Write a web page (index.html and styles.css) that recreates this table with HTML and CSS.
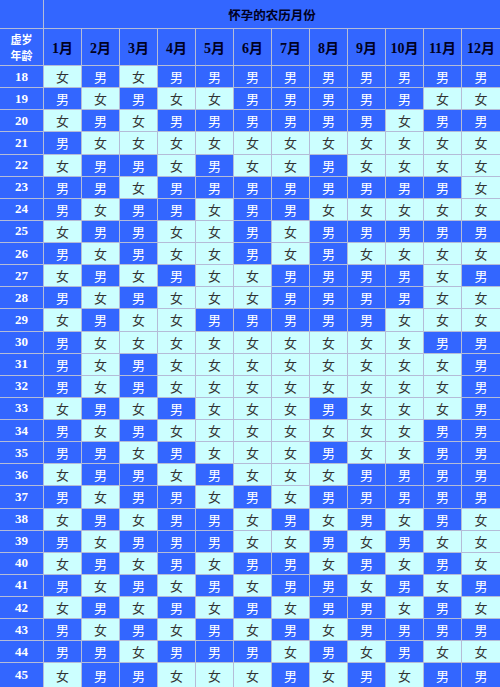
FILE: index.html
```html
<!DOCTYPE html>
<html lang="zh-CN">
<head>
<meta charset="utf-8">
<title>清宫生男生女表</title>
<link rel="stylesheet" href="styles.css">
</head>
<body>
<div class="chart">
  <div class="hd blank"></div>
  <div class="hd title">怀孕的农历月份</div>
  <div class="hd agehead"><span class="line">虚岁</span><span class="line">年龄</span></div>
  <div class="hd month">1月</div><div class="hd month">2月</div><div class="hd month">3月</div><div class="hd month">4月</div><div class="hd month">5月</div><div class="hd month">6月</div><div class="hd month">7月</div><div class="hd month">8月</div><div class="hd month">9月</div><div class="hd month">10月</div><div class="hd month">11月</div><div class="hd month">12月</div>

  <div class="age">18</div><span class="f">女</span><span class="m">男</span><span class="f">女</span><span class="m">男</span><span class="m">男</span><span class="m">男</span><span class="m">男</span><span class="m">男</span><span class="m">男</span><span class="m">男</span><span class="m">男</span><span class="m">男</span>
  <div class="age">19</div><span class="m">男</span><span class="f">女</span><span class="m">男</span><span class="f">女</span><span class="f">女</span><span class="m">男</span><span class="m">男</span><span class="m">男</span><span class="m">男</span><span class="m">男</span><span class="f">女</span><span class="f">女</span>
  <div class="age">20</div><span class="f">女</span><span class="m">男</span><span class="f">女</span><span class="m">男</span><span class="m">男</span><span class="m">男</span><span class="m">男</span><span class="m">男</span><span class="m">男</span><span class="f">女</span><span class="m">男</span><span class="m">男</span>
  <div class="age">21</div><span class="m">男</span><span class="f">女</span><span class="f">女</span><span class="f">女</span><span class="f">女</span><span class="f">女</span><span class="f">女</span><span class="f">女</span><span class="f">女</span><span class="f">女</span><span class="f">女</span><span class="f">女</span>
  <div class="age">22</div><span class="f">女</span><span class="m">男</span><span class="m">男</span><span class="f">女</span><span class="m">男</span><span class="f">女</span><span class="f">女</span><span class="m">男</span><span class="f">女</span><span class="f">女</span><span class="f">女</span><span class="f">女</span>
  <div class="age">23</div><span class="m">男</span><span class="m">男</span><span class="f">女</span><span class="m">男</span><span class="m">男</span><span class="m">男</span><span class="m">男</span><span class="m">男</span><span class="m">男</span><span class="m">男</span><span class="m">男</span><span class="f">女</span>
  <div class="age">24</div><span class="m">男</span><span class="f">女</span><span class="m">男</span><span class="m">男</span><span class="f">女</span><span class="m">男</span><span class="m">男</span><span class="f">女</span><span class="f">女</span><span class="f">女</span><span class="f">女</span><span class="f">女</span>
  <div class="age">25</div><span class="f">女</span><span class="m">男</span><span class="m">男</span><span class="f">女</span><span class="f">女</span><span class="m">男</span><span class="f">女</span><span class="m">男</span><span class="m">男</span><span class="m">男</span><span class="m">男</span><span class="m">男</span>
  <div class="age">26</div><span class="m">男</span><span class="f">女</span><span class="m">男</span><span class="f">女</span><span class="f">女</span><span class="m">男</span><span class="f">女</span><span class="m">男</span><span class="f">女</span><span class="f">女</span><span class="f">女</span><span class="f">女</span>
  <div class="age">27</div><span class="f">女</span><span class="m">男</span><span class="f">女</span><span class="m">男</span><span class="f">女</span><span class="f">女</span><span class="m">男</span><span class="m">男</span><span class="m">男</span><span class="m">男</span><span class="f">女</span><span class="m">男</span>
  <div class="age">28</div><span class="m">男</span><span class="f">女</span><span class="m">男</span><span class="f">女</span><span class="f">女</span><span class="f">女</span><span class="m">男</span><span class="m">男</span><span class="m">男</span><span class="m">男</span><span class="f">女</span><span class="f">女</span>
  <div class="age">29</div><span class="f">女</span><span class="m">男</span><span class="f">女</span><span class="f">女</span><span class="m">男</span><span class="m">男</span><span class="m">男</span><span class="m">男</span><span class="m">男</span><span class="f">女</span><span class="f">女</span><span class="f">女</span>
  <div class="age">30</div><span class="m">男</span><span class="f">女</span><span class="f">女</span><span class="f">女</span><span class="f">女</span><span class="f">女</span><span class="f">女</span><span class="f">女</span><span class="f">女</span><span class="f">女</span><span class="m">男</span><span class="m">男</span>
  <div class="age">31</div><span class="m">男</span><span class="f">女</span><span class="m">男</span><span class="f">女</span><span class="f">女</span><span class="f">女</span><span class="f">女</span><span class="f">女</span><span class="f">女</span><span class="f">女</span><span class="f">女</span><span class="m">男</span>
  <div class="age">32</div><span class="m">男</span><span class="f">女</span><span class="m">男</span><span class="f">女</span><span class="f">女</span><span class="f">女</span><span class="f">女</span><span class="f">女</span><span class="f">女</span><span class="f">女</span><span class="f">女</span><span class="m">男</span>
  <div class="age">33</div><span class="f">女</span><span class="m">男</span><span class="f">女</span><span class="m">男</span><span class="f">女</span><span class="f">女</span><span class="f">女</span><span class="m">男</span><span class="f">女</span><span class="f">女</span><span class="f">女</span><span class="m">男</span>
  <div class="age">34</div><span class="m">男</span><span class="f">女</span><span class="m">男</span><span class="f">女</span><span class="f">女</span><span class="f">女</span><span class="f">女</span><span class="f">女</span><span class="f">女</span><span class="f">女</span><span class="m">男</span><span class="m">男</span>
  <div class="age">35</div><span class="m">男</span><span class="m">男</span><span class="f">女</span><span class="m">男</span><span class="f">女</span><span class="f">女</span><span class="f">女</span><span class="m">男</span><span class="f">女</span><span class="f">女</span><span class="m">男</span><span class="m">男</span>
  <div class="age">36</div><span class="f">女</span><span class="m">男</span><span class="m">男</span><span class="f">女</span><span class="m">男</span><span class="f">女</span><span class="f">女</span><span class="f">女</span><span class="m">男</span><span class="m">男</span><span class="m">男</span><span class="m">男</span>
  <div class="age">37</div><span class="m">男</span><span class="f">女</span><span class="m">男</span><span class="m">男</span><span class="f">女</span><span class="m">男</span><span class="f">女</span><span class="m">男</span><span class="m">男</span><span class="m">男</span><span class="m">男</span><span class="m">男</span>
  <div class="age">38</div><span class="f">女</span><span class="m">男</span><span class="f">女</span><span class="m">男</span><span class="m">男</span><span class="f">女</span><span class="m">男</span><span class="f">女</span><span class="m">男</span><span class="f">女</span><span class="m">男</span><span class="f">女</span>
  <div class="age">39</div><span class="m">男</span><span class="f">女</span><span class="m">男</span><span class="m">男</span><span class="m">男</span><span class="f">女</span><span class="f">女</span><span class="m">男</span><span class="f">女</span><span class="m">男</span><span class="f">女</span><span class="f">女</span>
  <div class="age">40</div><span class="f">女</span><span class="m">男</span><span class="f">女</span><span class="m">男</span><span class="f">女</span><span class="m">男</span><span class="m">男</span><span class="f">女</span><span class="m">男</span><span class="f">女</span><span class="m">男</span><span class="f">女</span>
  <div class="age">41</div><span class="m">男</span><span class="f">女</span><span class="m">男</span><span class="f">女</span><span class="m">男</span><span class="f">女</span><span class="m">男</span><span class="m">男</span><span class="f">女</span><span class="m">男</span><span class="f">女</span><span class="m">男</span>
  <div class="age">42</div><span class="f">女</span><span class="m">男</span><span class="f">女</span><span class="m">男</span><span class="f">女</span><span class="m">男</span><span class="f">女</span><span class="m">男</span><span class="m">男</span><span class="f">女</span><span class="m">男</span><span class="f">女</span>
  <div class="age">43</div><span class="m">男</span><span class="f">女</span><span class="m">男</span><span class="f">女</span><span class="m">男</span><span class="f">女</span><span class="m">男</span><span class="f">女</span><span class="m">男</span><span class="m">男</span><span class="m">男</span><span class="m">男</span>
  <div class="age">44</div><span class="m">男</span><span class="m">男</span><span class="f">女</span><span class="m">男</span><span class="m">男</span><span class="m">男</span><span class="f">女</span><span class="m">男</span><span class="f">女</span><span class="m">男</span><span class="f">女</span><span class="f">女</span>
  <div class="age">45</div><span class="f">女</span><span class="m">男</span><span class="m">男</span><span class="f">女</span><span class="f">女</span><span class="f">女</span><span class="m">男</span><span class="f">女</span><span class="m">男</span><span class="f">女</span><span class="m">男</span><span class="m">男</span>
</div>
</body>
</html>
```
FILE: styles.css
```css
html, body {
  margin: 0;
  padding: 0;
  background: #3366ff;
}

.chart {
  width: 500px;
  height: 687px;
  display: grid;
  grid-template-columns: 43px repeat(11, 37px) 38px;
  grid-template-rows: 28px 36px repeat(27, 21.14px) 1fr;
  gap: 1px;
  background: #b4bcd8;
  overflow: hidden;
  font-family: "Noto Sans CJK SC", "Noto Sans", sans-serif;
}

.chart > * {
  display: flex;
  align-items: center;
  justify-content: center;
  margin: 0;
}

.hd {
  background: #3366ff;
  font-weight: bold;
  font-size: 13px;
  color: #000022;
}

.title {
  grid-column: 2 / span 12;
  font-size: 12.5px;
}

.chart > .agehead {
  flex-direction: column;
  gap: 0;
  color: #ffffff;
  font-size: 11px;
  line-height: 16px;
}

.line {
  display: block;
}

.month {
  font-family: "Liberation Serif", "Noto Sans CJK SC", serif;
  font-size: 14px;
}

.age {
  background: #3366ff;
  color: #ffffff;
  font-family: "Liberation Serif", serif;
  font-weight: bold;
  font-size: 13px;
}

.m {
  background: #3366ff;
  color: #ffffff;
  font-size: 13px;
}

.f {
  background: #ccffff;
  color: #333333;
  font-size: 13px;
}
```
